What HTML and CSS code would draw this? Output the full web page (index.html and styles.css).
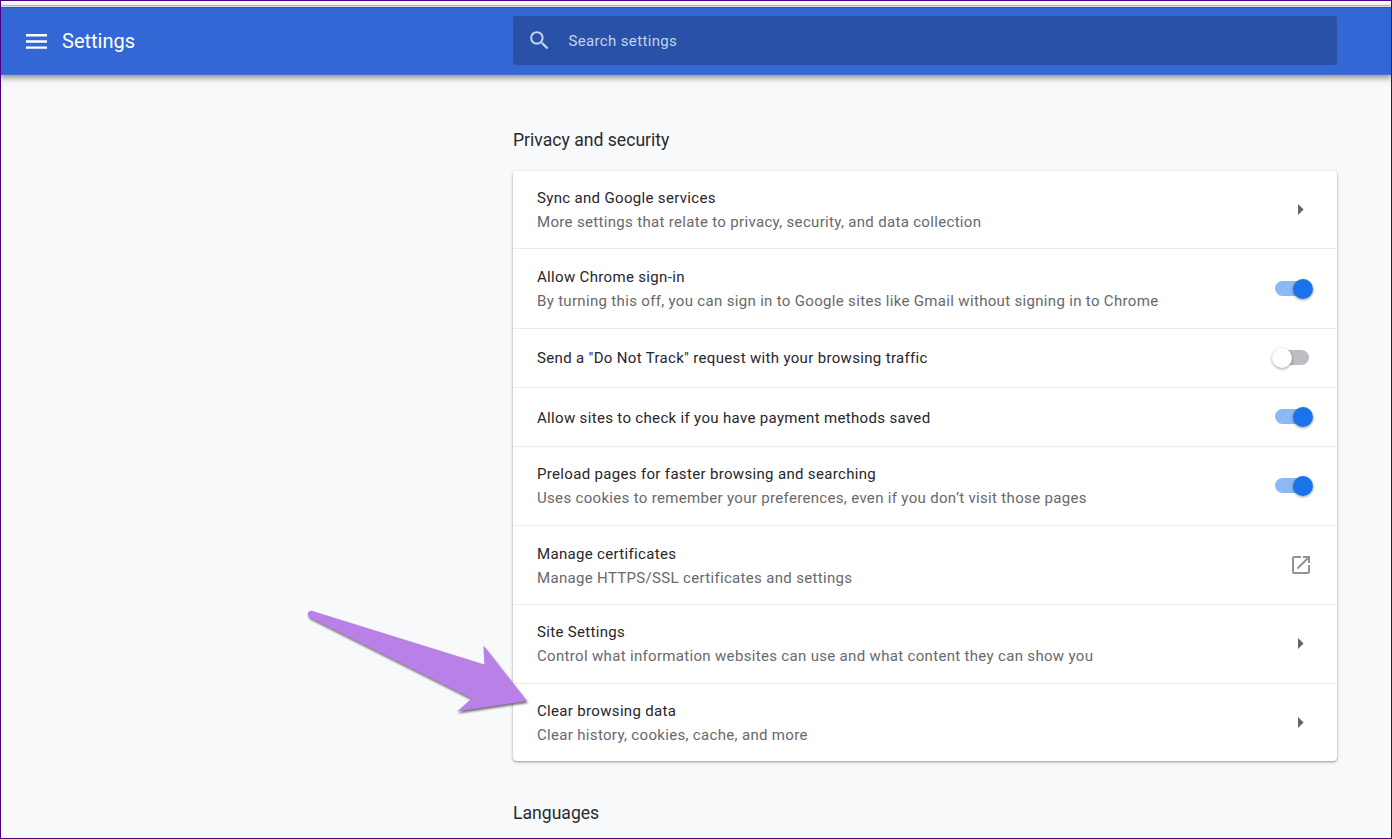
FILE: index.html
```html
<!DOCTYPE html>
<html lang="en">
<head>
<meta charset="utf-8">
<title>Settings</title>
<link rel="stylesheet" href="styles.css">
</head>
<body>
<div class="window">
  <div class="chrome-edge"></div>
  <header class="toolbar">
    <div class="brand">
      <svg class="menu-icon" width="21" height="15" viewBox="0 0 21 15"><path fill="#fff" d="M0 0h21v2.500H0zM0 6.200h21v2.500H0zM0 12.400h21v2.400H0z"/></svg>
      <h1 class="title">Settings</h1>
    </div>
    <div class="search">
      <svg class="search-icon" width="25" height="25" viewBox="0 0 24 24"><path fill="#c4d3ee" d="M15.500 14h-.79l-.28-.27A6.470 6.470 0 0 0 16 9.500 6.500 6.500 0 1 0 9.500 16c1.610 0 3.090-.59 4.230-1.570l.27.28v.79l5 4.990L20.490 19l-4.990-5zm-6 0C7.010 14 5 11.990 5 9.500S7.010 5 9.500 5 14 7.010 14 9.500 11.990 14 9.500 14z"/></svg>
      <span class="search-text">Search settings</span>
    </div>
  </header>
  <main class="content">
    <h2 class="section-title">Privacy and security</h2>
    <section class="card">
      <div class="row first">
        <div class="text"><div class="label">Sync and Google services</div><div class="sub">More settings that relate to privacy, security, and data collection</div></div>
        <svg class="arrow" width="6" height="11" viewBox="0 0 6 11"><path fill="#66636b" d="M0 0l5.600 5.500L0 11z"/></svg>
      </div>
      <div class="row tall">
        <div class="text"><div class="label">Allow Chrome sign-in</div><div class="sub">By turning this off, you can sign in to Google sites like Gmail without signing in to Chrome</div></div>
        <div class="toggle on"><span class="knob"></span></div>
      </div>
      <div class="row single">
        <div class="text"><div class="label">Send a "Do Not Track" request with your browsing traffic</div></div>
        <div class="toggle off"><span class="knob"></span></div>
      </div>
      <div class="row single payment">
        <div class="text"><div class="label">Allow sites to check if you have payment methods saved</div></div>
        <div class="toggle on"><span class="knob"></span></div>
      </div>
      <div class="row preload">
        <div class="text"><div class="label">Preload pages for faster browsing and searching</div><div class="sub">Uses cookies to remember your preferences, even if you don’t visit those pages</div></div>
        <div class="toggle on"><span class="knob"></span></div>
      </div>
      <div class="row certificates">
        <div class="text"><div class="label">Manage certificates</div><div class="sub">Manage HTTPS/SSL certificates and settings</div></div>
        <svg class="external" width="24" height="24" viewBox="0 0 24 24"><path fill="#929297" d="M19 19H5V5h7V3H5a2 2 0 0 0-2 2v14a2 2 0 0 0 2 2h14c1.100 0 2-.9 2-2v-7h-2v7zM14 3v2h3.590l-9.830 9.830 1.410 1.410L19 6.410V10h2V3h-7z"/></svg>
      </div>
      <div class="row site">
        <div class="text"><div class="label">Site Settings</div><div class="sub">Control what information websites can use and what content they can show you</div></div>
        <svg class="arrow" width="6" height="11" viewBox="0 0 6 11"><path fill="#66636b" d="M0 0l5.600 5.500L0 11z"/></svg>
      </div>
      <div class="row last">
        <div class="text"><div class="label">Clear browsing data</div><div class="sub">Clear history, cookies, cache, and more</div></div>
        <svg class="arrow" width="6" height="11" viewBox="0 0 6 11"><path fill="#66636b" d="M0 0l5.600 5.500L0 11z"/></svg>
      </div>
    </section>
    <h2 class="section-title next">Languages</h2>
  </main>
  <svg class="pointer" width="240" height="120" viewBox="0 0 240 120"><path fill="#b981e8" d="M12.500 10L184.500 63.500 183.500 44.500 227 100 157 110.500 171.500 97.500 9.500 16.500Q6.500 14 8.500 11 10.500 9.300 12.500 10z"/></svg>
</div>
</body>
</html>
```
FILE: styles.css
```css
* { box-sizing: border-box; }
body { margin: 0; font-family: Roboto, "Liberation Sans", sans-serif; }
.window {
  position: relative;
  width: 1392px;
  height: 839px;
  overflow: hidden;
  border: 1px solid #4b0082;
  background: #f8f9fb;
}
.chrome-edge {
  height: 6px;
  background: linear-gradient(#fff 4px, #c4c4c4 4px, #c4c4c4 5px, #fff 5px);
}
.toolbar {
  display: flex;
  height: 68px;
  padding-top: 9px;
  background: #3367d6;
  border-top: 1px solid #2a59bd;
  border-bottom: 1px solid #4272cc;
  box-shadow: 0 2px 6px 1px rgba(0, 0, 0, .42);
}
.brand {
  display: flex;
  align-items: center;
  width: 512px;
  height: 48px;
  padding-left: 25px;
  gap: 15px;
}
.title {
  margin: 0;
  font-size: 20px;
  line-height: 24px;
  font-weight: 400;
  color: #fff;
}
.search {
  display: flex;
  align-items: center;
  width: 824px;
  height: 49px;
  margin-top: -1px;
  padding-left: 14px;
  gap: 16.500px;
  border-radius: 2px;
  background: #2851a7;
  color: #c4d3ee;
}
.search-text { font-size: 15px; letter-spacing: .35px; }
.content { width: 824px; margin-left: 512px; padding-top: 53px; }
.section-title {
  margin: 0;
  height: 24px;
  font-size: 17.600px;
  line-height: 24px;
  font-weight: 400;
  color: #2a2a2e;
}
.next { margin-top: 40px; }
.card {
  margin-top: 19px;
  border-radius: 4px;
  background: #fff;
  box-shadow: 0 1px 2px rgba(60, 64, 67, .4), 0 1px 3px 1px rgba(60, 64, 67, .12);
}
.row {
  display: flex;
  align-items: center;
  justify-content: space-between;
  height: 79px;
  padding: 0 24px;
  border-bottom: 1px solid #ebebed;
}
.text { align-self: flex-start; padding-top: 15px; }
.single .text { padding-top: 17px; }
.payment .text { padding-top: 18px; }
.tall .text, .certificates .text { padding-top: 16px; }
.first { height: 78px; }
.tall { height: 80px; }
.single { height: 59px; }
.last { height: 77px; border-bottom: 0; }
.label, .sub {
  font-size: 15px;
  line-height: 24px;
  letter-spacing: .33px;
  color: #26262b;
  white-space: nowrap;
}
.sub { color: #68686d; letter-spacing: .325px; }
.arrow { margin-right: 9px; }
.site .arrow { margin-bottom: 2px; }
.external { margin-right: 0.500px; }
.toggle {
  position: relative;
  width: 35px;
  height: 15px;
  margin-right: 3px;
  border-radius: 8px;
}
.single .toggle, .preload .toggle { margin-bottom: 2px; }
.on { background: #8cb9f3; }
.off { width: 34px; margin-right: 4px; background: #bdbdc1; }
.knob {
  position: absolute;
  top: -2px;
  left: 18px;
  width: 20px;
  height: 20px;
  border-radius: 50%;
  background: #1a73e8;
  box-shadow: 0 1px 3px rgba(0, 0, 0, .4);
}
.off .knob { left: -3.500px; background: #fff; }
.pointer {
  position: absolute;
  left: 299px;
  top: 600px;
  filter: drop-shadow(1px 2px 1px rgba(0, 0, 0, .55));
}
```
